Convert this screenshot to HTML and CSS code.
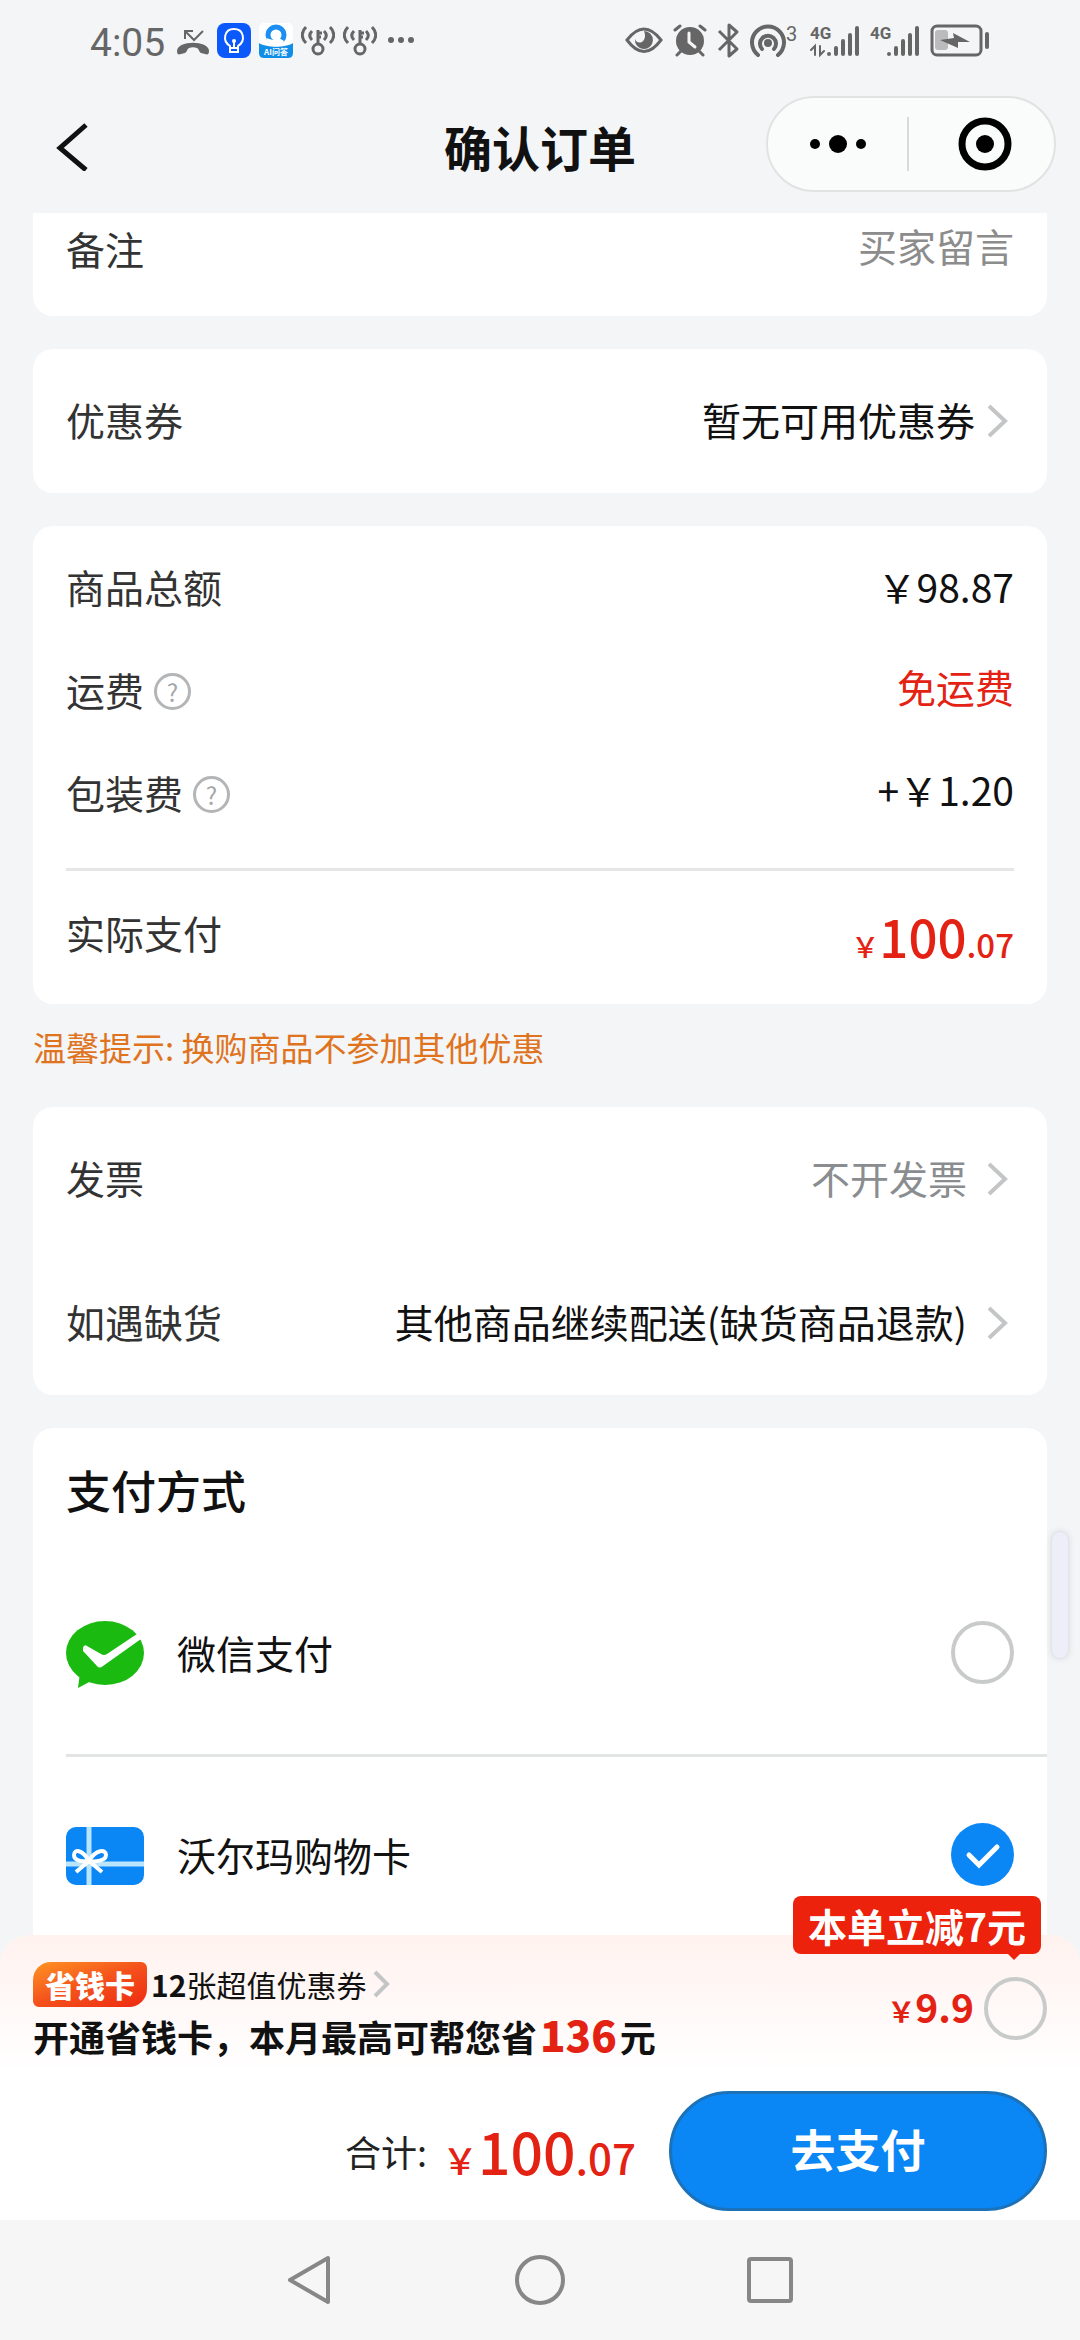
FILE: index.html
```
<!DOCTYPE html>
<html lang="zh-CN">
<head>
    <meta charset="UTF-8">
    <meta name="viewport" content="width=device-width, initial-scale=1.0">
    <title>确认订单</title>
    <link rel="stylesheet" href="styles.css">
</head>
<body>

    <div class="status-bar">
        <div class="status-group">
            <span class="clock">4:05</span>
            <!-- missed call -->
            <svg width="32" height="36" viewBox="0 0 32 36" fill="none" stroke="#666" stroke-width="2">
                <path d="M8 16V8h8M9 9l8 8L26 8"/>
                <path d="M0 28c0-11 32-11 32 0 0 3-1 4-4 3l-4-1c-2-1-2-4-4-5-3-1-5-1-8 0-2 1-2 4-4 5l-4 1c-3 1-4 0-4-3z" fill="#666" stroke="none"/>
            </svg>
            <svg width="34" height="36" viewBox="0 0 34 36" fill="none" stroke="#fff" stroke-width="2">
                <rect width="34" height="35" rx="8" fill="#0b59fb" stroke="none"/>
                <path d="M13 25v-2C5 18 7 6 17 6s12 12 4 17v2zM13 25v4h8v-4M17 19v6"/>
                <circle cx="17" cy="18" r="2" fill="#fff" stroke="none"/>
            </svg>
            <svg width="34" height="36" viewBox="0 0 34 36">
                <rect width="34" height="35" rx="5" fill="#fff"/>
                <path d="M0 20c8 5 26 5 34 0v10q0 5-5 5H5q-5 0-5-5z" fill="#0f8ee8"/>
                <circle cx="17" cy="12" r="8" fill="none" stroke="#1c8ff0" stroke-width="5"/>
                <path d="M7 15c3 10 16 11 18 3l-5-3-6 2z" fill="#fff"/>
                <text class="app-name" x="17" y="32" text-anchor="middle">AI问答</text>
            </svg>
            <svg width="34" height="36" viewBox="0 0 34 36" fill="none" stroke="#666" stroke-width="3">
                <path d="M5 4C0 9 0 15 5 20M11 8c-3 3-3 6 0 9M29 4c5 5 5 11 0 16M23 8c3 3 3 6 0 9M17 21V7M17 10h4M17 14h3"/>
                <circle cx="17" cy="26" r="5"/>
            </svg>
            <svg width="34" height="36" viewBox="0 0 34 36" fill="none" stroke="#666" stroke-width="3">
                <path d="M5 4C0 9 0 15 5 20M11 8c-3 3-3 6 0 9M29 4c5 5 5 11 0 16M23 8c3 3 3 6 0 9M17 21V7M17 10h4M17 14h3"/>
                <circle cx="17" cy="26" r="5"/>
            </svg>
            <svg width="34" height="36" viewBox="0 0 34 36" fill="#666">
                <circle cx="6" cy="17" r="3"/><circle cx="16" cy="17" r="3"/><circle cx="26" cy="17" r="3"/>
            </svg>
        </div>
        <div class="status-group">
            <!-- eye comfort -->
            <svg width="38" height="36" viewBox="0 0 38 36">
                <path d="M2 17Q19-5 36 17 19 40 2 17z" fill="none" stroke="#666" stroke-width="3"/>
                <path d="M19 8a9 9 0 1 1-9 8q2 5 7 3 5-4 2-11z" fill="#666"/>
            </svg>
            <!-- alarm -->
            <svg width="34" height="36" viewBox="0 0 34 36" fill="none" stroke="#666" stroke-width="3" stroke-linecap="round">
                <circle cx="17" cy="18" r="14" fill="#666" stroke="none"/>
                <path d="M2 7l5-4M32 7l-5-4M4 32l4-4M30 32l-4-4"/>
                <path d="M16 10v9l6 5" stroke="#f3f5f7"/>
            </svg>
            <!-- bluetooth -->
            <svg width="23" height="36" viewBox="0 0 23 36" fill="none" stroke="#666" stroke-width="3" stroke-linejoin="round">
                <path d="M2 8l18 18-8 7V2l8 7L2 27"/>
            </svg>
            <!-- hotspot -->
            <svg width="50" height="36" viewBox="0 0 50 36" fill="none" stroke="#666" stroke-width="4" stroke-linecap="round">
                <path d="M8 32a16 16 0 1 1 20 0M12 26a8 8 0 1 1 12 0"/>
                <circle cx="18" cy="20" r="4" fill="#666" stroke="none"/>
                <text class="hotspot-count" x="36" y="18">3</text>
            </svg>
            <svg width="50" height="36" viewBox="0 0 50 36" fill="none" stroke="#666" stroke-width="4" stroke-linecap="round">
                <text class="network" x="0" y="16">4G</text>
                <path d="M5 32V23l-4 4M10 23v9l4-4" stroke-width="2"/>
                <path d="M19 31v0M26 25v6M33 18v13M40 12v19M47 5v26"/>
            </svg>
            <svg width="50" height="36" viewBox="0 0 50 36" fill="none" stroke="#666" stroke-width="4" stroke-linecap="round">
                <text class="network" x="0" y="16">4G</text>
                <path d="M19 31v0M26 25v6M33 18v13M40 12v19M47 5v26"/>
            </svg>
            <!-- battery, charging -->
            <svg width="59" height="36" viewBox="0 0 59 36">
                <rect x="2" y="3" width="49" height="29" rx="5" fill="none" stroke="#666" stroke-width="3"/>
                <rect x="5" y="7" width="13" height="20" rx="3" fill="#bbb"/>
                <path d="M10 17l14-2-1-5 17 9-12 0v6z" fill="#666"/>
                <path d="M57 11v13" stroke="#666" stroke-width="4" stroke-linecap="round"/>
            </svg>
        </div>
    </div>

    <header class="header">
        <button class="back" aria-label="返回">
            <svg width="36" height="50" viewBox="0 0 36 50" fill="none" stroke="#111" stroke-width="5">
                <path d="M32 4L6 27l26 22"/>
            </svg>
        </button>
        <h1 class="title">确认订单</h1>
        <div class="capsule">
            <button class="capsule-button" aria-label="更多">
                <svg width="58" height="54" viewBox="0 0 58 54">
                    <circle cx="6" cy="27" r="5"/><circle cx="29" cy="27" r="9"/><circle cx="52" cy="27" r="5"/>
                </svg>
            </button>
            <button class="capsule-button" aria-label="关闭">
                <svg width="54" height="54" viewBox="0 0 54 54">
                    <circle cx="27" cy="27" r="23" fill="none" stroke="#000" stroke-width="7"/>
                    <circle cx="27" cy="27" r="9"/>
                </svg>
            </button>
        </div>
    </header>

    <main class="content">
        <section class="card card-top">
            <div class="row row-note">
                <label class="label" for="note">备注</label>
                <input type="text" id="note" class="note raised" placeholder="买家留言">
            </div>
        </section>

        <section class="card">
            <a class="row row-link" href="#">
                <span class="label">优惠券</span>
                <span class="value">暂无可用优惠券</span>
                <svg class="arrow" width="39" height="40" viewBox="0 0 39 40"><path d="M14 5l16 15-16 15"/></svg>
            </a>
        </section>

        <section class="card card-amount">
            <div class="row">
                <span class="label">商品总额</span>
                <span class="value">￥98.87</span>
            </div>
            <div class="row">
                <span class="label">运费</span>
                <button class="help" aria-label="运费说明">?</button>
                <span class="value raised red">免运费</span>
            </div>
            <div class="row">
                <span class="label">包装费</span>
                <button class="help" aria-label="包装费说明">?</button>
                <span class="value raised">+￥1.20</span>
            </div>
            <div class="row row-total">
                <span class="label">实际支付</span>
                <span class="price"><span class="yen">￥</span><b>100</b>.07</span>
            </div>
        </section>

        <p class="tip">温馨提示: 换购商品不参加其他优惠</p>

        <section class="card">
            <a class="row row-link" href="#">
                <span class="label">发票</span>
                <span class="value spaced gray">不开发票</span>
                <svg class="arrow" width="39" height="40" viewBox="0 0 39 40"><path d="M14 5l16 15-16 15"/></svg>
            </a>
            <a class="row row-link" href="#">
                <span class="label">如遇缺货</span>
                <span class="value spaced">其他商品继续配送(缺货商品退款)</span>
                <svg class="arrow" width="39" height="40" viewBox="0 0 39 40"><path d="M14 5l16 15-16 15"/></svg>
            </a>
        </section>

        <section class="card card-pay">
            <h2 class="pay-title">支付方式</h2>
            <label class="pay-row">
                <svg width="78" height="70" viewBox="0 0 78 70">
                    <ellipse cx="39" cy="34" rx="39" ry="32" fill="#1aba10"/>
                    <path d="M14 54l-2 15 15-8z" fill="#1aba10"/>
                    <path d="M17 29q1-4 4-2l14 8q3 2 6 0l30-20 4 5-38 27q-4 3-6 0L17 32z" fill="#fff"/>
                </svg>
                <span class="pay-name">微信支付</span>
                <input type="radio" class="radio" name="pay">
            </label>
            <label class="pay-row">
                <svg width="78" height="58" viewBox="0 0 78 58" fill="none">
                    <rect width="78" height="58" rx="10" fill="#0a86f5"/>
                    <path d="M23 0v58M0 37h78" stroke="#b9e4fb" stroke-width="5"/>
                    <path d="M23 34C16 22 8 22 8 28s9 7 15 6zM23 34c7-12 17-12 17-6s-11 7-17 6zM23 34L10 45M23 34l13 11" stroke="#fff" stroke-width="4"/>
                </svg>
                <span class="pay-name">沃尔玛购物卡</span>
                <input type="radio" class="radio" name="pay" checked>
            </label>
        </section>
    </main>

    <footer class="footer">
        <div class="promo">
            <div class="promo-text">
                <a class="promo-link" href="#">
                    <span class="promo-badge">省钱卡</span>
                    <span><b>12</b>张超值优惠券</span>
                    <svg class="arrow" width="28" height="30" viewBox="0 0 28 30"><path d="M9 3l12 12L9 27"/></svg>
                </a>
                <label class="promo-title" for="saver">开通省钱卡，本月最高可帮您省<b>136</b>元</label>
            </div>
            <span class="promo-price"><span class="yen">￥</span>9.9</span>
            <input type="checkbox" id="saver" class="radio">
            <span class="bubble">本单立减7元</span>
        </div>
        <div class="pay-bar">
            <span class="sum-label">合计:</span>
            <span class="price sum"><span class="yen">￥</span><b>100</b>.07</span>
            <button class="pay-button">去支付</button>
        </div>
    </footer>

    <nav class="system-nav">
        <button aria-label="返回">
            <svg width="52" height="52" viewBox="0 0 52 52"><path d="M6 26L44 4v44z"/></svg>
        </button>
        <button aria-label="主页">
            <svg width="52" height="52" viewBox="0 0 52 52"><circle cx="26" cy="26" r="23"/></svg>
        </button>
        <button aria-label="最近任务">
            <svg width="52" height="52" viewBox="0 0 52 52"><rect x="5" y="5" width="42" height="42" rx="2"/></svg>
        </button>
    </nav>

    <div class="side-handle"></div>

</body>
</html>
```
FILE: styles.css
```
* {
    box-sizing: border-box;
}
body {
    margin: 0;
    height: 100vh;
    display: flex;
    flex-direction: column;
    background: #f3f5f7;
    color: #111;
    font-family: "Noto Sans CJK SC", sans-serif;
    font-size: 39px;
    line-height: 56px;
}
button {
    padding: 0;
    border: none;
    background: none;
    font-family: inherit;
    display: flex;
    align-items: center;
    justify-content: center;
}
a {
    color: inherit;
    text-decoration: none;
}
svg {
    display: block;
    flex: none;
}

/* status bar */
.status-bar {
    height: 82px;
    flex: none;
    display: flex;
    justify-content: space-between;
    padding: 0 91px 0 90px;
    color: #666;
}
.status-group {
    display: flex;
    align-items: center;
    gap: 10px;
}
.status-group:first-child {
    gap: 8px;
}
.clock {
    margin-right: 4px;
    padding-top: 4px;
    font-family: Roboto, sans-serif;
    font-size: 39px;
}
.app-name {
    font-size: 8px;
    font-weight: 700;
    fill: #fff;
}
.hotspot-count,
.network {
    font-family: Roboto, sans-serif;
    font-size: 20px;
    fill: #666;
    stroke: none;
}
.network {
    font-size: 17px;
    font-weight: 700;
}

/* title bar */
.header {
    height: 131px;
    flex: none;
    display: grid;
    grid-template-columns: 1fr auto 1fr;
    align-items: center;
    padding: 0 24px 4px 54px;
}
.back {
    width: 36px;
}
.title {
    margin: 0;
    padding-right: 30px;
    font-size: 48px;
    font-weight: 700;
}
.capsule {
    justify-self: end;
    display: flex;
    width: 290px;
    height: 96px;
    margin-top: -4px;
    padding: 19px 0;
    background: #fafcfb;
    border: 2px solid #e1e3e3;
    border-radius: 48px;
}
.capsule-button {
    flex: 1;
}
.capsule-button + .capsule-button {
    padding-left: 6px;
    border-left: 2px solid #d8dada;
}

/* cards */
.content {
    flex: 1;
    min-height: 0;
    overflow: hidden;
    padding: 0 33px;
}
.card {
    margin-bottom: 33px;
    background: #fff;
    border-radius: 20px;
}
.card-top {
    padding-bottom: 30px;
    border-radius: 0 0 20px 20px;
}
.row {
    display: flex;
    align-items: center;
    height: 103px;
    padding: 0 33px;
}
.row-note {
    height: 73px;
}
.row-link {
    height: 144px;
}
.label,
.value,
.pay-name {
    padding-bottom: 4px;
}
.label {
    color: #333;
}
.value {
    margin-left: auto;
}
.spaced {
    margin-right: 8px;
}
.raised {
    padding-bottom: 10px;
}
.gray {
    color: #8a8d90;
}
.red {
    color: #e32213;
}
.note {
    flex: 1;
    min-width: 0;
    border: none;
    outline: none;
    padding-top: 0;
    padding-right: 0;
    background: none;
    font: inherit;
    text-align: right;
}
.note::placeholder {
    color: #8c8c8c;
}
.arrow {
    fill: none;
    stroke: #c3c5c7;
    stroke-width: 4;
}
.help {
    width: 37px;
    height: 37px;
    margin: 2px 0 0 10px;
    border: 3px solid #b3b5b7;
    border-radius: 50%;
    color: #a3a5a7;
    font-size: 24px;
    line-height: 30px;
}
.card-amount {
    padding-top: 10px;
}
.row-total {
    height: 136px;
    margin: 23px 33px 0;
    padding: 0 0 8px;
    border-top: 3px solid #e6e6e6;
}
.price {
    margin-left: auto;
    color: #e32213;
    font-size: 33px;
    font-weight: 500;
}
.price b {
    font-size: 51px;
    font-weight: 500;
}
.yen {
    font-size: 28px;
}
.row-total .price {
    padding-top: 14px;
}
.tip {
    margin: -14px 0 36px;
    color: #e0731d;
    font-size: 33px;
    line-height: 48px;
}

/* payment methods */
.pay-title {
    margin: 0;
    padding: 32px 33px 34px;
    font-size: 45px;
    font-weight: 500;
    line-height: 60px;
}
.pay-row {
    display: flex;
    align-items: center;
    height: 200px;
    padding-right: 33px;
    margin-left: 33px;
}
.pay-row + .pay-row {
    border-top: 3px solid #e3e4e4;
}
.pay-name {
    flex: 1;
    margin-left: 33px;
}
.radio {
    appearance: none;
    flex: none;
    width: 63px;
    height: 63px;
    margin: 0;
    border: 4px solid #c9cbcb;
    border-radius: 50%;
}
.pay-row .radio {
    margin-bottom: 3px;
}
.radio:checked {
    border: none;
    background: #0a86f5 url("data:image/svg+xml,%3Csvg xmlns='http://www.w3.org/2000/svg' viewBox='0 0 63 63'%3E%3Cpath d='M18 32l10 10 18-18' fill='none' stroke='white' stroke-width='5' stroke-linecap='round'/%3E%3C/svg%3E");
}

/* bottom bar */
.footer {
    flex: none;
    background: linear-gradient(#fff2ef, #fff 140px);
    border-radius: 30px 30px 0 0;
}
.promo {
    position: relative;
    display: flex;
    align-items: center;
    height: 147px;
    padding: 0 33px;
}
.promo-text {
    flex: 1;
    padding-top: 8px;
}
.promo-link {
    display: flex;
    align-items: center;
    font-size: 30px;
    line-height: 45px;
}
.promo-badge {
    width: 114px;
    margin-right: 4px;
    background: linear-gradient(160deg, #ff9422, #f4511c 50%, #ee2a10);
    border-radius: 18px 6px 18px 6px;
    color: #fff;
    font-weight: 900;
    text-align: center;
}
.promo-title {
    display: block;
    font-size: 36px;
    font-weight: 700;
}
.promo-title b {
    margin: 0 3px;
    color: #e32213;
    font-size: 42px;
    line-height: 54px;
}
.promo-price {
    margin-right: 10px;
    color: #e32213;
    font-weight: 700;
}
.bubble {
    position: absolute;
    top: -39px;
    right: 39px;
    padding: 0 15px;
    background: #ec220d;
    border-radius: 8px;
    color: #fff;
    font-weight: 700;
    line-height: 58px;
}
.bubble::after {
    content: "";
    position: absolute;
    top: 100%;
    right: 21px;
    border: 6px solid transparent;
    border-top-color: #ec220d;
}
.pay-bar {
    display: flex;
    align-items: center;
    padding: 9px 33px;
}
.sum-label {
    margin-left: auto;
    margin-right: 15px;
    color: #222;
    font-size: 36px;
}
.sum {
    margin-left: 0;
    padding-top: 6px;
    font-size: 42px;
}
.sum b {
    font-size: 57px;
}
.sum .yen {
    font-size: 36px;
}
.pay-button {
    width: 378px;
    height: 120px;
    margin-left: 33px;
    padding-bottom: 6px;
    background: #0a86f5;
    border: 3px solid #1b72b8;
    border-radius: 60px;
    color: #fff;
    font-size: 45px;
    font-weight: 700;
}

/* android navigation keys */
.system-nav {
    flex: none;
    display: flex;
    align-items: center;
    justify-content: center;
    gap: 178px;
    height: 120px;
    background: #f6f6f6;
}
.system-nav svg {
    fill: none;
    stroke: #878787;
    stroke-width: 4;
    stroke-linejoin: round;
}

/* edge handle floating over the page */
.side-handle {
    position: absolute;
    top: 1531px;
    right: 11px;
    width: 18px;
    height: 128px;
    background: #eceef8;
    border: 1px solid #e2e4ea;
    border-radius: 9px;
    box-shadow: 0 0 6px #d9dbde;
}
```
